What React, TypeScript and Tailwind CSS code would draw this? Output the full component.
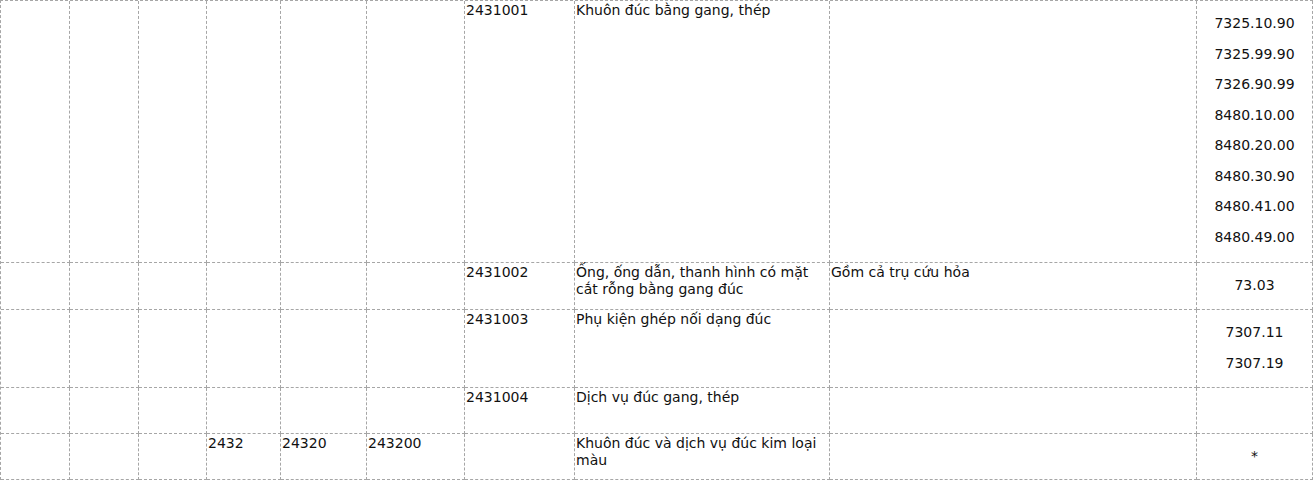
import React from "react";

type Row = {
  cells: string[]; // cols 1..9
  hs: string[];
};

const rows: Row[] = [
  { cells: ["", "", "", "", "", "", "2431001", "Khuôn đúc bằng gang, thép", ""], hs: ["7325.10.90", "7325.99.90", "7326.90.99", "8480.10.00", "8480.20.00", "8480.30.90", "8480.41.00", "8480.49.00"] },
  { cells: ["", "", "", "", "", "", "2431002", "Ống, ống dẫn, thanh hình có mặt cắt rỗng bằng gang đúc", "Gồm cả trụ cứu hỏa"], hs: ["73.03"] },
  { cells: ["", "", "", "", "", "", "2431003", "Phụ kiện ghép nối dạng đúc", ""], hs: ["7307.11", "7307.19"] },
  { cells: ["", "", "", "", "", "", "2431004", "Dịch vụ đúc gang, thép", ""], hs: [] },
  { cells: ["", "", "", "2432", "24320", "243200", "", "Khuôn đúc và dịch vụ đúc kim loại màu", ""], hs: ["*"] },
];

export default function App() {
  return (
    <div className="bg-white w-[1316px] h-[481px] overflow-hidden">
      <div
        className="grid w-[1313px] grid-cols-[69px_69px_68px_74px_86px_98px_110px_255px_367px_116px] grid-rows-[262px_47px_78px_46px_46px] border-l border-t border-dashed border-[#a6a6a6] text-[14px] leading-[16.5px] text-[#111]"
        style={{ fontFamily: '"DejaVu Sans", Verdana, sans-serif' }}
      >
        {rows.map((r, ri) => (
          <React.Fragment key={ri}>
            {r.cells.map((c, ci) => (
              <div key={ci} className="border-r border-b border-dashed border-[#a6a6a6] pt-[1px] pl-[1px] pr-[2px]">
                {c}
              </div>
            ))}
            <div className="border-r border-b border-dashed border-[#a6a6a6] pt-[14px] flex flex-col items-center gap-[13px] leading-[17.5px]">
              {r.hs.map((h, hi) => (
                <div key={hi}>{h}</div>
              ))}
            </div>
          </React.Fragment>
        ))}
      </div>
    </div>
  );
}
